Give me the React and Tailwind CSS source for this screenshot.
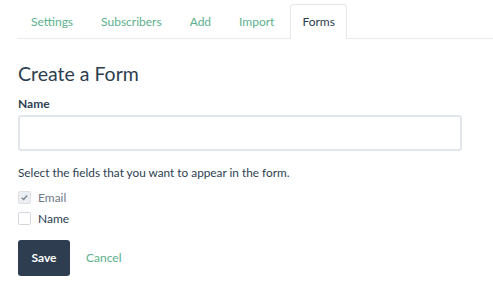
import React from 'react'

const tabs = ['Settings', 'Subscribers', 'Add', 'Import', 'Forms']

const App = () => {
  return (
    <div className="w-[493px] h-[285px] bg-white font-['Lato',sans-serif] text-[#2c3e50] overflow-hidden">
      <div className="flex pl-[17px] pt-[4px]">
        <div className="flex flex-1 border-b border-[#e8ebee]">
          {tabs.map((t) =>
            t === 'Forms' ? (
              <div key={t} className="ml-[2px] px-[11px] h-[35px] -mb-px flex items-center pt-[1px] text-[12px] text-[#2c3e50] bg-white border border-[#e3e6ea] border-b-white rounded-t-[3px]">
                {t}
              </div>
            ) : (
              <div key={t} className="px-[14px] h-[34px] flex items-center pt-[1px] text-[12px] text-[#5cb08d]">
                {t}
              </div>
            )
          )}
        </div>
      </div>
      <div className="px-[18px]">
        <h1 className="mt-[23px] text-[19.5px] leading-[24px]">Create a Form</h1>
        <div className="mt-[10px] text-[12px] font-bold leading-[15px]">Name</div>
        <input className="block mt-[4px] w-[444px] h-[36px] border-2 border-[#e1e6ed] rounded-[3px] outline-none" />
        <p className="mt-[14px] text-[11.8px] leading-[15px]">Select the fields that you want to appear in the form.</p>
        <div className="mt-[11px] flex items-center gap-[7px] h-[13px]">
          <div className="w-[13px] h-[13px] rounded-[2px] bg-[#eceef1] border border-[#dde1e6] flex items-center justify-center">
            <svg width="9" height="9" viewBox="0 0 10 10"><path d="M2 5.2l2 2 4-4.5" stroke="#7d8894" strokeWidth="1.7" fill="none" /></svg>
          </div>
          <span className="text-[12px] text-[#6f7a86]">Email</span>
        </div>
        <div className="mt-[8px] flex items-center gap-[7px] h-[13px]">
          <div className="w-[13px] h-[13px] rounded-[2px] bg-white border border-[#d3d8de]" />
          <span className="text-[12px]">Name</span>
        </div>
        <div className="mt-[15px] flex items-center gap-[16px]">
          <button className="w-[52px] h-[36px] rounded-[3px] bg-[#2e3e50] text-white text-[12px] font-bold">Save</button>
          <span className="text-[12px] text-[#5cb08d]">Cancel</span>
        </div>
      </div>
    </div>
  )
}

export default App
